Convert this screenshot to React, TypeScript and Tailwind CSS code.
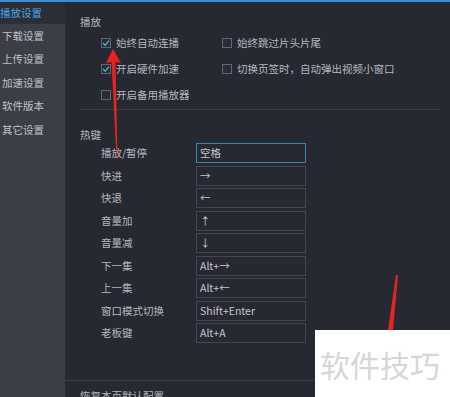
const font = { fontFamily: '"Noto Sans CJK SC", "Noto Sans", sans-serif' };

const sideItems = ["播放设置", "下载设置", "上传设置", "加速设置", "软件版本", "其它设置"];

const hotkeys = [
  ["播放/暂停", "空格"],
  ["快进", "→"],
  ["快退", "←"],
  ["音量加", "↑"],
  ["音量减", "↓"],
  ["下一集", "Alt+→"],
  ["上一集", "Alt+←"],
  ["窗口模式切换", "Shift+Enter"],
  ["老板键", "Alt+A"],
];

function Check({ on, label }: { on?: boolean; label: string }) {
  return (
    <div className="flex items-center gap-[5px]">
      <span className="flex h-[10px] w-[10px] items-center justify-center border border-[#63666e] bg-[#2a2d35]">
        {on && (
          <svg width="8" height="8" viewBox="0 0 8 8">
            <path d="M1 4 L3.2 6.2 L7 1.6" fill="none" stroke="#3fb6d8" strokeWidth="1.4" />
          </svg>
        )}
      </span>
      <span>{label}</span>
    </div>
  );
}

export default function App() {
  return (
    <div
      className="relative flex h-[397px] w-[450px] flex-col overflow-hidden bg-[#262932] text-[10.5px] text-[#b6b8bd]"
      style={font}
    >
      <div className="h-[2px] bg-[#3a8fd8]" />
      <div className="flex flex-1">
        <aside className="w-[65px] bg-[#3b3e46]">
          {sideItems.map((s, i) => (
            <div
              key={s}
              className={
                i === 0
                  ? "flex h-[22px] items-center bg-[#2b2e36] text-[#4aa6e6]"
                  : "flex h-[23.5px] items-center pl-[2px] text-[#c0c2c6]"
              }
            >
              {s}
            </div>
          ))}
        </aside>

        <main className="flex flex-1 flex-col">
          <div className="pl-[15px] pr-[10px]">
            <div className="pt-[13px] leading-[14px]">播放</div>
            <div className="mt-[1px] grid grid-cols-[121px_1fr] pl-[21px]">
              <div className="flex flex-col">
                <div className="flex h-[26px] items-center"><Check on label="始终自动连播" /></div>
                <div className="flex h-[26px] items-center"><Check on label="开启硬件加速" /></div>
                <div className="flex h-[26px] items-center"><Check label="开启备用播放器" /></div>
              </div>
              <div className="flex flex-col">
                <div className="flex h-[26px] items-center"><Check label="始终跳过片头片尾" /></div>
                <div className="flex h-[26px] items-center"><Check label="切换页签时，自动弹出视频小窗口" /></div>
              </div>
            </div>
            <div className="mt-[1px] h-px bg-[#3c3f47]" />
            <div className="pt-[18px] leading-[14px]">热键</div>
            <div className="mt-[1px] flex flex-col gap-[2.5px] pl-[21px]">
              {hotkeys.map(([k, v], i) => (
                <div key={k} className="flex h-[20px] items-center">
                  <span className="w-[95px]">{k}</span>
                  <span
                    className={
                      "flex h-[20px] w-[110px] items-center border px-[3px] text-[#c6c8cc] " +
                      (i === 0 ? "border-[#3a86a8]" : "border-[#44474f]")
                    }
                  >
                    {v}
                  </span>
                </div>
              ))}
            </div>
          </div>
          <div className="flex-1" />
          <div className="h-px bg-[#3c3f47]" />
          <div className="h-[16px] pl-[15px] pt-[8px] leading-[14px]">恢复本页默认配置</div>
        </main>
      </div>

      <svg className="pointer-events-none absolute left-0 top-0" width="450" height="397">
        <polygon points="113,49 121,63 115.5,62 117.5,157 116.5,157 111.5,62 106,63" fill="#e8231d" />
        <polygon points="396,275 398,275 393,330 388,330" fill="#e8231d" />
      </svg>

      <div className="absolute left-[315px] top-[330px] flex h-[67px] w-[135px] items-center bg-white pl-[5px]">
        <span className="text-[30px] leading-none text-[#d6d6d6]" style={font}>
          软件技巧
        </span>
      </div>
    </div>
  );
}
